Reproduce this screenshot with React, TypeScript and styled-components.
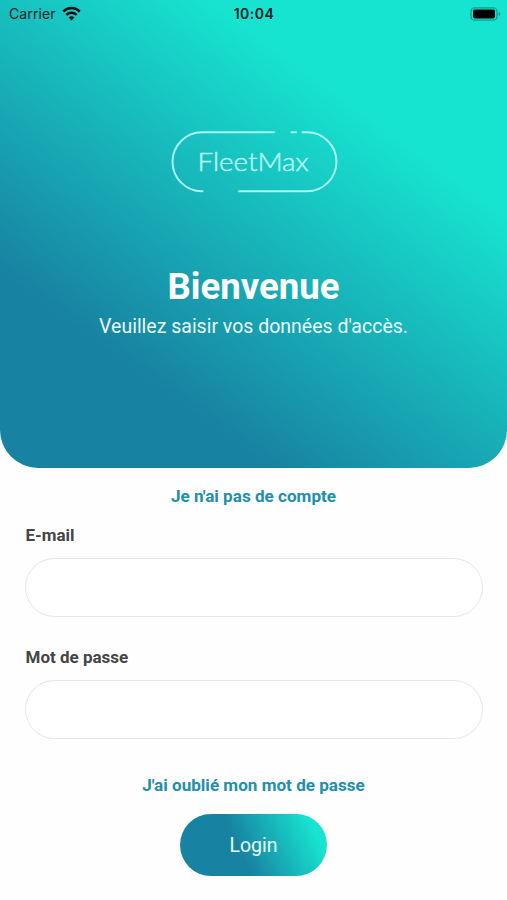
import React from 'react';
import styled, { createGlobalStyle } from 'styled-components';

const GlobalStyle = createGlobalStyle`
  * { box-sizing: border-box; }
  body { margin: 0; background: #fefefe; font-family: Roboto, sans-serif; }
`;

const Screen = styled.main`
  width: 507px;
  height: 900px;
  display: flex;
  flex-direction: column;
  background: #fefefe;
  overflow: hidden;
`;

const Hero = styled.header`
  height: 468px;
  flex: none;
  display: flex;
  flex-direction: column;
  align-items: center;
  border-radius: 0 0 38px 38px;
  background: linear-gradient(36deg, #1882a2 23.5%, #17e4d0 74.5%);
  color: #fff;
`;

const StatusBar = styled.div`
  width: 100%;
  height: 27px;
  padding: 0 6px 0 9px;
  display: grid;
  grid-template-columns: 1fr auto 1fr;
  align-items: center;
  font-family: Inter, sans-serif;
  color: #06201f;
`;

const Carrier = styled.div`
  display: flex;
  align-items: center;
  gap: 6px;
  font-size: 14px;
  letter-spacing: 0.12px;
`;

const Clock = styled.time`
  margin-right: 2px;
  font-size: 14px;
  font-weight: 600;
  letter-spacing: 0.5px;
`;

const BatteryIcon = styled.svg`
  justify-self: end;
`;

const Logo = styled.svg`
  margin-top: 103px;
  flex: none;
`;

const LogoText = styled.text`
  font-family: Lato, sans-serif;
  font-weight: 300;
  font-size: 25.5px;
  fill: #b8f9f2;
  stroke: #b8f9f2;
  stroke-width: 0.45px;
  stroke-linejoin: round;
`;

const Title = styled.h1`
  margin: 70px 0 0;
  font-size: 36.6px;
  line-height: 46px;
  font-weight: 700;
`;

const Subtitle = styled.p`
  margin: 3px 0 0;
  font-size: 19.5px;
  line-height: 28px;
  color: #e9fbfc;
`;

const Form = styled.form`
  padding: 17px 25px 0;
  display: flex;
  flex-direction: column;
`;

const TextLink = styled.a`
  align-self: center;
  font-size: 17.1px;
  line-height: 22px;
  font-weight: 700;
  color: #218fae;
`;

const Field = styled.label<{ $top: number }>`
  margin-top: ${(p) => p.$top}px;
  display: flex;
  flex-direction: column;
  gap: 12px;
  font-size: 17px;
  line-height: 22px;
  font-weight: 700;
  color: #454545;
`;

const FieldName = styled.span`
  padding-left: 0.5px;
`;

const Input = styled.input`
  width: 458px;
  height: 59px;
  padding: 0 24px;
  border: 1.5px solid #e6e6e6;
  border-radius: 30px;
  background: #fff;
  font: 400 18px Roboto, sans-serif;
  outline: none;
`;

const ForgotRow = styled.div`
  margin-top: 35px;
  display: flex;
  justify-content: center;
`;

const LoginButton = styled.button`
  align-self: center;
  margin-top: 18px;
  width: 147px;
  height: 62px;
  border: 0;
  border-radius: 31px;
  background: linear-gradient(65deg, #1882a2 41%, #17e4d0 89%);
  color: #e9fbfc;
  font: 400 19.5px Roboto, sans-serif;
`;

export default function App() {
  return (
    <>
      <GlobalStyle />
      <Screen>
        <Hero>
          <StatusBar>
            <Carrier>
              <span>Carrier</span>
              <svg width="19" height="15" viewBox="0 0 19 15" fill="none" stroke="#020e0e" strokeWidth="2.5">
                <path d="M1.2 5.5C5.9.9 13.1.9 17.8 5.5" />
                <path d="M4.3 8.8c2.9-2.7 7.5-2.7 10.4 0" />
                <path d="M6.6 11.4c1.7-1.6 4.1-1.6 5.8 0L9.5 14.4z" fill="#020e0e" stroke="none" />
              </svg>
            </Carrier>
            <Clock>10:04</Clock>
            <BatteryIcon width="31" height="14" viewBox="0 0 31 14">
              <rect x="1" y="0.8" width="26" height="12.4" rx="3.6" fill="none" stroke="#109c90" strokeWidth="1.3" />
              <rect x="3" y="2.6" width="22" height="8.8" rx="1.8" fill="#000" />
              <path d="M28.6 4.8c2.2.8 2.2 3.6 0 4.400z" fill="#109c90" />
            </BatteryIcon>
          </StatusBar>
          <Logo width="168" height="64" viewBox="0 0 168 64" fill="none">
            <g stroke="#a9f6ef" strokeWidth="2" strokeLinecap="round">
              <path d="M104 2.300H32A29.500 29.500 0 0 0 32 61.300H32.500" />
              <path d="M69 61.300H137A29.500 29.500 0 0 0 137 2.300H132.500" />
              <path d="M121.500 2.300H126" />
            </g>
            <LogoText x="27.500" y="41.300" textLength="111" lengthAdjust="spacingAndGlyphs">FleetMax</LogoText>
          </Logo>
          <Title>Bienvenue</Title>
          <Subtitle>Veuillez saisir vos données d'accès.</Subtitle>
        </Hero>
        <Form>
          <TextLink>Je n'ai pas de compte</TextLink>
          <Field $top={17}>
            <FieldName>E-mail</FieldName>
            <Input type="email" />
          </Field>
          <Field $top={29}>
            <FieldName>Mot de passe</FieldName>
            <Input type="password" />
          </Field>
          <ForgotRow>
            <TextLink>J'ai oublié mon mot de passe</TextLink>
          </ForgotRow>
          <LoginButton type="button">Login</LoginButton>
        </Form>
      </Screen>
    </>
  );
}
